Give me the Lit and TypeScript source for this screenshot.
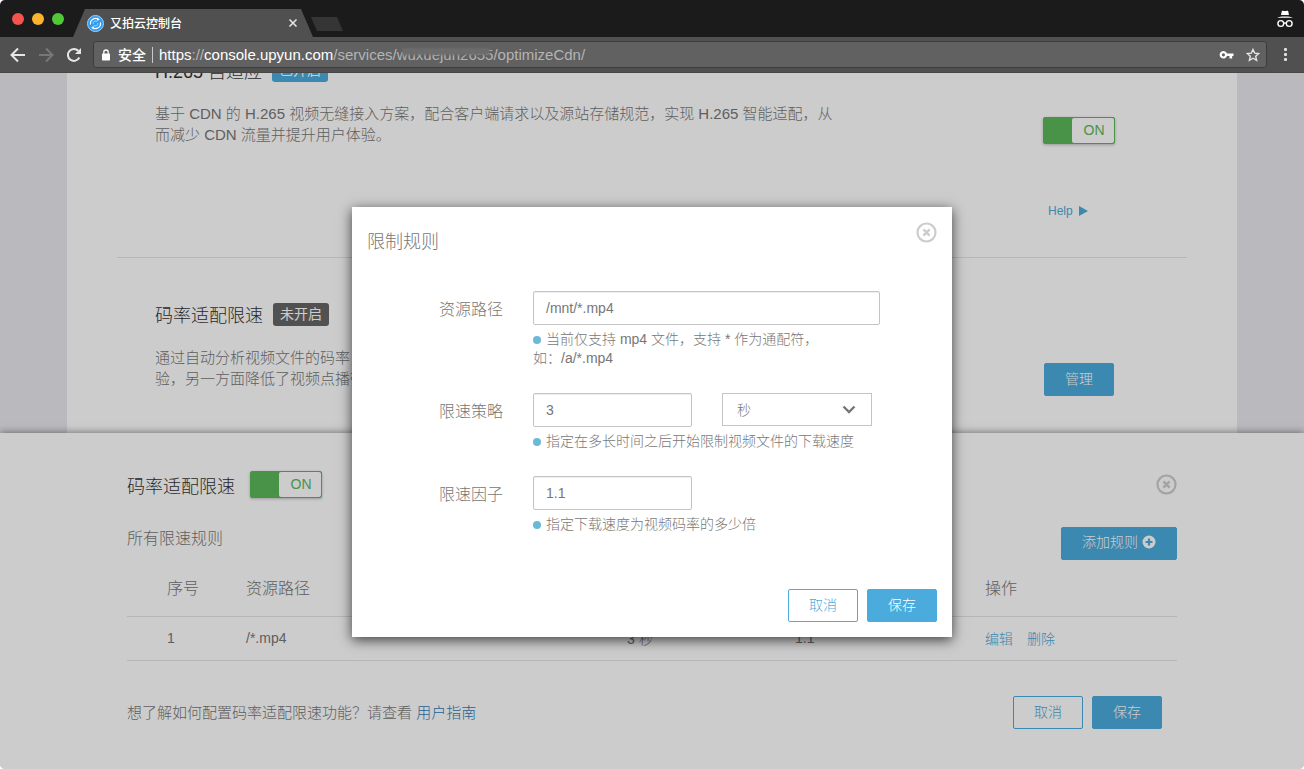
import { LitElement, html, css, nothing } from "lit";
import { customElement, property } from "lit/decorators.js";

const base = css`
  *,
  *::before,
  *::after {
    box-sizing: border-box;
  }
  a {
    color: #4aabdc;
    text-decoration: none;
  }
  h2,
  h3,
  p {
    margin: 0;
    font-weight: inherit;
  }
  svg {
    display: block;
    flex: none;
  }
  button,
  input,
  select {
    font: inherit;
    color: inherit;
    margin: 0;
  }
  button {
    padding: 0;
    border: 0;
    background: none;
    cursor: pointer;
  }
  .btn {
    height: 33px;
    min-width: 70px;
    padding: 0 20px 2px;
    border: 1px solid #4aabdc;
    border-radius: 2px;
    background: #4aabdc;
    color: #fff;
    font-size: 14px;
    line-height: 20px;
  }
  .btn.plain {
    background: #fff;
    color: #4aabdc;
  }
  .close {
    width: 21px;
    height: 21px;
    color: #ccc;
  }
`;

const closeIcon = html`<svg width="21" height="21" viewBox="0 0 21 21" fill="none" stroke="currentColor">
  <circle cx="10.5" cy="10.5" r="9" stroke-width="2.2" />
  <path d="M7.4 7.4l6.2 6.2M13.6 7.4l-6.2 6.2" stroke-width="2.4" />
</svg>`;

@customElement("toggle-switch")
class ToggleSwitch extends LitElement {
  @property() label = "";
  static styles = [
    base,
    css`
      :host {
        display: block;
        width: 72px;
        height: 27px;
      }
      .switch {
        position: relative;
        display: flex;
        height: 100%;
        border: 1px solid #5cb85c;
        border-radius: 2px;
        background: #5cb85c;
        box-shadow: 0 1px 3px rgba(0, 0, 0, 0.25);
        cursor: pointer;
      }
      .switch input {
        position: absolute;
        inset: 0;
        opacity: 0;
      }
      .state {
        flex: 1;
        margin-left: 28px;
        padding-left: 2px;
        border-radius: 2px;
        background: #fff;
        color: #5cb85c;
        font-size: 14px;
        line-height: 25px;
        text-align: center;
      }
    `,
  ];
  render() {
    return html`<label class="switch">
      <input type="checkbox" checked aria-label=${this.label} />
      <span class="state">ON</span>
    </label>`;
  }
}

@customElement("browser-chrome")
class BrowserChrome extends LitElement {
  static styles = [
    base,
    css`
      :host {
        display: block;
        flex: none;
        color: #fff;
      }
      .tabs {
        display: flex;
        align-items: flex-end;
        height: 37px;
        padding: 0 10px 0 12px;
        background: #1b1b1b;
      }
      .lights {
        display: flex;
        gap: 8px;
        width: 61px;
        align-self: center;
      }
      .light {
        width: 12px;
        height: 12px;
        border-radius: 50%;
      }
      .red {
        background: #f4534f;
      }
      .yellow {
        background: #fbb42b;
      }
      .green {
        background: #50c838;
      }
      .tab {
        display: flex;
        align-items: center;
        gap: 6px;
        width: 240px;
        height: 28px;
        padding: 0 14px;
        background: #505050;
        clip-path: polygon(0 100%, 12px 0, 228px 0, 100% 100%);
        font-size: 12px;
        font-weight: 500;
      }
      .title {
        flex: 1;
        padding-bottom: 2px;
      }
      .new-tab {
        width: 32px;
        height: 14px;
        margin: 0 auto 6px -2px;
        background: #353535;
        clip-path: polygon(0 0, 26px 0, 100% 100%, 6px 100%);
      }
      .incognito {
        align-self: center;
      }
      .toolbar {
        display: flex;
        align-items: center;
        height: 36px;
        padding: 0 10px;
        background: #505050;
        border-bottom: 1px solid #464646;
      }
      .nav {
        display: flex;
        gap: 12px;
        width: 83px;
      }
      .address {
        display: flex;
        align-items: center;
        flex: 1;
        height: 27px;
        padding: 0 6px 0 7px;
        border: 1px solid #3c3c3c;
        border-radius: 3px;
        background: #616161;
        font-size: 14px;
      }
      .secure {
        margin: 0 6px 0 7px;
        padding-bottom: 2px;
        font-size: 14px;
        font-weight: 500;
      }
      .url {
        flex: 1;
        padding-left: 6px;
        border-left: 1px solid #c8c8c8;
        line-height: 16px;
        color: #b4b4b4;
        font-size: 15px;
        white-space: nowrap;
      }
      .bright {
        color: #fff;
      }
      .masked {
        position: relative;
      }
      .masked::after {
        content: "";
        position: absolute;
        inset: 2px 3px 8px 5px;
        background: #6c6c6c;
        filter: blur(1px);
      }
      .actions {
        display: flex;
        gap: 12px;
      }
      .menu {
        margin-left: 10px;
      }
    `,
  ];
  render() {
    return html`
      <div class="tabs">
        <div class="lights">
          <span class="light red"></span><span class="light yellow"></span><span class="light green"></span>
        </div>
        <div class="tab">
          <svg width="17" height="17" viewBox="0 0 17 17" fill="none">
            <circle cx="8.500" cy="8.500" r="8" fill="#2f9cf0" stroke="#9fd4fb" />
            <path d="M3.600 9.500a5 5 0 0 1 8-5M13.400 7.500a5 5 0 0 1-8 5" stroke="#fff" stroke-width="1.200" />
            <path d="M6.200 8.800a2.500 2.500 0 0 1 4-2.300M10.800 8.200a2.500 2.500 0 0 1-4 2.300" stroke="#bfe2fc" stroke-width=".9" />
            <path d="M10.500 2.500l2.400 2.600-3 .5zM6.500 14.500l-2.400-2.600 3-.5z" fill="#fff" />
          </svg>
          <span class="title">又拍云控制台</span>
          <button aria-label="关闭标签页">
            <svg width="12" height="12" viewBox="0 0 12 12" stroke="#e4e4e4" stroke-width="1.6">
              <path d="M2.500 2.500l7 7M9.500 2.500l-7 7" />
            </svg>
          </button>
        </div>
        <button class="new-tab" aria-label="新标签页"></button>
        <svg class="incognito" width="18" height="18" viewBox="0 0 18 18">
          <path d="M1 7.800c2-.9 4-1.200 8-1.200s6 .3 8 1.200zM5 5l.9-4.200c1-.5 1.600.3 3.100.3s2.100-.8 3.100-.3L13 5z" fill="#fff" />
          <g fill="none" stroke="#fff" stroke-width="1.400">
            <circle cx="4.800" cy="13.500" r="2.900" />
            <circle cx="13.200" cy="13.500" r="2.900" />
            <path d="M7.700 13.300q1.300-.8 2.600 0" />
          </g>
        </svg>
      </div>
      <div class="toolbar">
        <div class="nav">
          <button aria-label="后退">
            <svg width="16" height="16" viewBox="0 0 16 16" fill="none" stroke="#e6e6e6" stroke-width="2">
              <path d="M15 8H2M8 1.500L1.500 8 8 14.500" />
            </svg>
          </button>
          <button aria-label="前进">
            <svg width="16" height="16" viewBox="0 0 16 16" fill="none" stroke="#777" stroke-width="2">
              <path d="M1 8h13M8 1.500L14.500 8 8 14.500" />
            </svg>
          </button>
          <button aria-label="重新加载">
            <svg width="16" height="16" viewBox="0 0 16 16">
              <path d="M13.300 10.500A6 6 0 1 1 12.300 3.800" fill="none" stroke="#e6e6e6" stroke-width="2" />
              <path d="M15 1v6H9z" fill="#e6e6e6" />
            </svg>
          </button>
        </div>
        <div class="address">
          <svg width="10" height="12" viewBox="0 0 10 12">
            <rect x="1" y="4.500" width="8" height="7" rx=".8" fill="#fff" />
            <path d="M2.800 5V3.200a2.200 2.200 0 0 1 4.400 0V5" fill="none" stroke="#fff" stroke-width="1.300" />
          </svg>
          <span class="secure">安全</span>
          <div class="url" role="textbox" aria-label="网址"><span class="bright">https</span>://<span class="bright">console.upyun.com</span>/services/<span class="masked">wuxuejun2655</span>/optimizeCdn/</div>
          <div class="actions">
            <button aria-label="密码">
              <svg width="15" height="14" viewBox="0 0 15 14">
                <path d="M8 5.500h6.500v2.600h-1.300v2.400h-2.700V8.100H8a3.800 3.800 0 1 1 0-2.600zM4.400 5.200a1.600 1.600 0 1 0 0 3.200 1.600 1.600 0 0 0 0-3.200z" fill="#fff" fill-rule="evenodd" />
              </svg>
            </button>
            <button aria-label="收藏">
              <svg width="14" height="14" viewBox="0 0 14 14">
                <path d="M7 1.500l1.700 3.700 4 .4-3 2.700.9 4L7 10.200l-3.600 2.100.9-4-3-2.700 4-.4z" fill="none" stroke="#e8e8e8" stroke-width="1.400" />
              </svg>
            </button>
          </div>
        </div>
        <button class="menu" aria-label="菜单">
          <svg width="17" height="14" viewBox="0 0 17 14" fill="#e0e0e0">
            <rect x="7" y="0" width="3" height="3" rx="1" />
            <rect x="7" y="5" width="3" height="3" rx="1" />
            <rect x="7" y="10" width="3" height="3" rx="1" />
          </svg>
        </button>
      </div>
    `;
  }
}

@customElement("settings-page")
class SettingsPage extends LitElement {
  static styles = [
    base,
    css`
      :host {
        display: block;
        height: 100%;
        overflow: hidden;
        background: #e9e8ee;
      }
      .container {
        max-width: 1170px;
        height: 100%;
        margin: 0 auto;
        padding: 0 50px;
        background: #fff;
      }
      .section {
        display: flex;
        justify-content: space-between;
        padding: 40px 72px 0 38px;
        border-bottom: 1px solid #e4e4e4;
      }
      .section:first-child {
        height: 229px;
        margin-top: -44px;
        padding-top: 25px;
      }
      .section:last-child {
        border: 0;
      }
      .copy {
        width: 685px;
      }
      .heading {
        display: flex;
        align-items: center;
        gap: 10px;
        height: 31px;
        color: #333;
        font-size: 18px;
      }
      .tag {
        margin-top: 2px;
        padding: 0 7px;
        border-radius: 3px;
        background: #666;
        color: #fff;
        font-size: 14px;
        font-weight: 400;
        line-height: 23px;
      }
      .tag.on {
        background: #4aabdc;
      }
      .text {
        margin-top: 18px;
        color: #777;
        font-size: 15px;
        line-height: 21px;
      }
      .side {
        display: flex;
        flex-direction: column;
        align-items: flex-start;
        width: 72px;
        padding-top: 63px;
      }
      .help {
        display: flex;
        align-items: center;
        gap: 6px;
        margin: 60px 0 0 5px;
        font-size: 12px;
      }
      .section:last-child .side {
        padding: 65px 0 0 1px;
      }
    `,
  ];
  render() {
    return html`<div class="container">
      <section class="section">
        <div class="copy">
          <h2 class="heading">H.265 自适应 <span class="tag on">已开启</span></h2>
          <p class="text">基于 CDN 的 H.265 视频无缝接入方案，配合客户端请求以及源站存储规范，实现 H.265 智能适配，从而减少 CDN 流量并提升用户体验。</p>
        </div>
        <div class="side">
          <toggle-switch label="H.265 自适应"></toggle-switch>
          <a class="help" href="#help">Help
            <svg width="9" height="10" viewBox="0 0 9 10"><path d="M0 0l9 5-9 5z" fill="#4aabdc" /></svg>
          </a>
        </div>
      </section>
      <section class="section">
        <div class="copy">
          <h2 class="heading">码率适配限速 <span class="tag">未开启</span></h2>
          <p class="text">通过自动分析视频文件的码率，智能限制视频的下载速度，一方面保证终端用户流畅稳定的视频播放体验，另一方面降低了视频点播带来的带宽成本。</p>
        </div>
        <div class="side"><button class="btn">管理</button></div>
      </section>
    </div>`;
  }
}

interface Rule {
  path: string;
  delay: string;
  factor: string;
}

@customElement("rules-drawer")
class RulesDrawer extends LitElement {
  @property({ attribute: false }) rules: Rule[] = [{ path: "/*.mp4", delay: "3 秒", factor: "1.1" }];
  static styles = [
    base,
    css`
      :host {
        display: block;
        padding: 38px 24px 40px;
        background: #fff;
        box-shadow: 0 0 8px rgba(0, 0, 0, 0.5);
        color: #777;
      }
      .inner {
        max-width: 1050px;
        margin: 0 auto;
      }
      .head,
      .bar,
      .foot {
        display: flex;
        align-items: center;
      }
      .head {
        gap: 15px;
        height: 27px;
      }
      .head h2 {
        padding-top: 2px;
        color: #333;
        font-size: 18px;
      }
      .close {
        margin-left: auto;
      }
      .bar {
        justify-content: space-between;
        height: 33px;
        margin-top: 29px;
      }
      .bar h3 {
        margin-bottom: 10px;
        font-size: 16px;
        line-height: 19px;
      }
      .add {
        display: flex;
        align-items: center;
        gap: 4px;
      }
      table {
        width: 100%;
        border-collapse: collapse;
        table-layout: fixed;
        font-size: 14px;
      }
      th,
      td {
        height: 44px;
        padding: 0 0 2px;
        border-bottom: 1px solid #e4e4e4;
        text-align: left;
        font-weight: inherit;
      }
      th {
        height: 57px;
        font-size: 16px;
      }
      .c-no {
        width: 119px;
      }
      .c-path {
        width: 381px;
      }
      .c-delay {
        width: 168px;
      }
      .c-factor {
        width: 190px;
      }
      th:first-child,
      td:first-child {
        padding-left: 40px;
      }
      td a + a {
        margin-left: 14px;
      }
      .foot {
        gap: 9px;
        margin-top: 35px;
        padding-right: 15px;
      }
      .foot p {
        margin-right: auto;
        padding-bottom: 2px;
        font-size: 15px;
      }
      .guide {
        color: #337ab7;
      }
    `,
  ];
  render() {
    return html`<div class="inner">
      <div class="head">
        <h2>码率适配限速</h2>
        <toggle-switch label="码率适配限速"></toggle-switch>
        <button class="close" aria-label="关闭">${closeIcon}</button>
      </div>
      <div class="bar">
        <h3>所有限速规则</h3>
        <button class="btn add">
          添加规则
          <svg width="14" height="14" viewBox="0 0 14 14">
            <circle cx="7" cy="7" r="6.500" fill="#fff" />
            <path d="M7 3.500v7M3.500 7h7" stroke="#4aabdc" stroke-width="2.200" />
          </svg>
        </button>
      </div>
      <table>
        <thead>
          <tr>
            <th class="c-no">序号</th>
            <th class="c-path">资源路径</th>
            <th class="c-delay">限速策略</th>
            <th class="c-factor">限速因子</th>
            <th>操作</th>
          </tr>
        </thead>
        <tbody>
          ${this.rules.map(
            (r, i) => html`<tr>
              <td>${i + 1}</td>
              <td>${r.path}</td>
              <td>${r.delay}</td>
              <td>${r.factor}</td>
              <td><a href="#edit">编辑</a><a href="#delete">删除</a></td>
            </tr>`
          )}
        </tbody>
      </table>
      <div class="foot">
        <p>想了解如何配置码率适配限速功能？请查看 <a class="guide" href="#guide">用户指南</a></p>
        <button class="btn plain">取消</button>
        <button class="btn">保存</button>
      </div>
    </div>`;
  }
}

@customElement("rule-dialog")
class RuleDialog extends LitElement {
  static styles = [
    base,
    css`
      :host {
        display: block;
        width: 600px;
        max-width: 100%;
        padding: 15px;
        background: #fff;
        box-shadow: 0 3px 12px rgba(0, 0, 0, 0.7);
        color: #777;
      }
      .head {
        display: flex;
        justify-content: space-between;
        height: 69px;
      }
      .head h2 {
        padding-top: 6px;
        font-size: 18px;
        line-height: 28px;
      }
      .row {
        display: flex;
        gap: 30px;
        padding-right: 57px;
        margin-bottom: 25px;
      }
      .row > label {
        width: 136px;
        font-size: 16px;
        line-height: 38px;
        text-align: right;
      }
      .field {
        flex: 1;
        font-size: 14px;
      }
      .controls {
        display: flex;
        gap: 30px;
      }
      input,
      select {
        width: 159px;
        height: 34px;
        padding: 0 12px;
        border: 1px solid #c4c4c4;
        border-radius: 2px;
        background: #fff;
        box-shadow: inset 0 1px 1px rgba(0, 0, 0, 0.07);
        outline: 0;
      }
      input.wide {
        width: 100%;
      }
      .select {
        position: relative;
        width: 150px;
      }
      select {
        width: 100%;
        height: 33px;
        padding: 0 14px;
        border-radius: 0;
        box-shadow: none;
        appearance: none;
      }
      .chevron {
        position: absolute;
        top: 12px;
        right: 16px;
        pointer-events: none;
      }
      .hint {
        margin-top: 5px;
        line-height: 19px;
      }
      .hint::before {
        content: "";
        display: inline-block;
        width: 8px;
        height: 8px;
        margin-right: 5px;
        border-radius: 50%;
        background: #6bb9d8;
      }
      .foot {
        display: flex;
        justify-content: flex-end;
        gap: 9px;
        padding-top: 30px;
      }
    `,
  ];
  private row(id: string, label: string, value: string, hint: unknown, extra: unknown = nothing, wide = false) {
    return html`<div class="row">
      <label for=${id}>${label}</label>
      <div class="field">
        <div class="controls">
          <input id=${id} class=${wide ? "wide" : ""} type="text" .value=${value} />
          ${extra}
        </div>
        <p class="hint">${hint}</p>
      </div>
    </div>`;
  }
  render() {
    return html`
      <div class="head">
        <h2>限制规则</h2>
        <button class="close" aria-label="关闭">${closeIcon}</button>
      </div>
      ${this.row("path", "资源路径", "/mnt/*.mp4", html`当前仅支持 mp4 文件，支持 * 作为通配符，<br />如：/a/*.mp4`, nothing, true)}
      ${this.row(
        "delay",
        "限速策略",
        "3",
        "指定在多长时间之后开始限制视频文件的下载速度",
        html`<div class="select">
          <select aria-label="单位"><option>秒</option></select>
          <svg class="chevron" width="14" height="9" viewBox="0 0 14 9" fill="none" stroke="#777" stroke-width="2.400">
            <path d="M1.500 1.500L7 7l5.500-5.500" />
          </svg>
        </div>`
      )}
      ${this.row("factor", "限速因子", "1.1", "指定下载速度为视频码率的多少倍")}
      <div class="foot">
        <button class="btn plain">取消</button>
        <button class="btn">保存</button>
      </div>
    `;
  }
}

@customElement("app-root")
class AppRoot extends LitElement {
  static styles = [
    base,
    css`
      :host {
        display: flex;
        flex-direction: column;
        height: 100vh;
        overflow: hidden;
        border-radius: 5px;
        font-family: "Liberation Sans", "Noto Sans CJK SC", sans-serif;
        font-weight: 300;
      }
      .viewport {
        position: relative;
        flex: 1;
        min-height: 0;
      }
      .drawer {
        position: absolute;
        inset: auto 0 0;
      }
      .backdrop {
        position: absolute;
        inset: 0;
        display: flex;
        align-items: center;
        justify-content: center;
        padding-top: 2px;
        background: rgba(0, 0, 0, 0.2);
      }
    `,
  ];
  render() {
    return html`
      <browser-chrome></browser-chrome>
      <main class="viewport">
        <settings-page></settings-page>
        <rules-drawer class="drawer"></rules-drawer>
        <div class="backdrop">
          <rule-dialog role="dialog" aria-label="限制规则"></rule-dialog>
        </div>
      </main>
    `;
  }
}
